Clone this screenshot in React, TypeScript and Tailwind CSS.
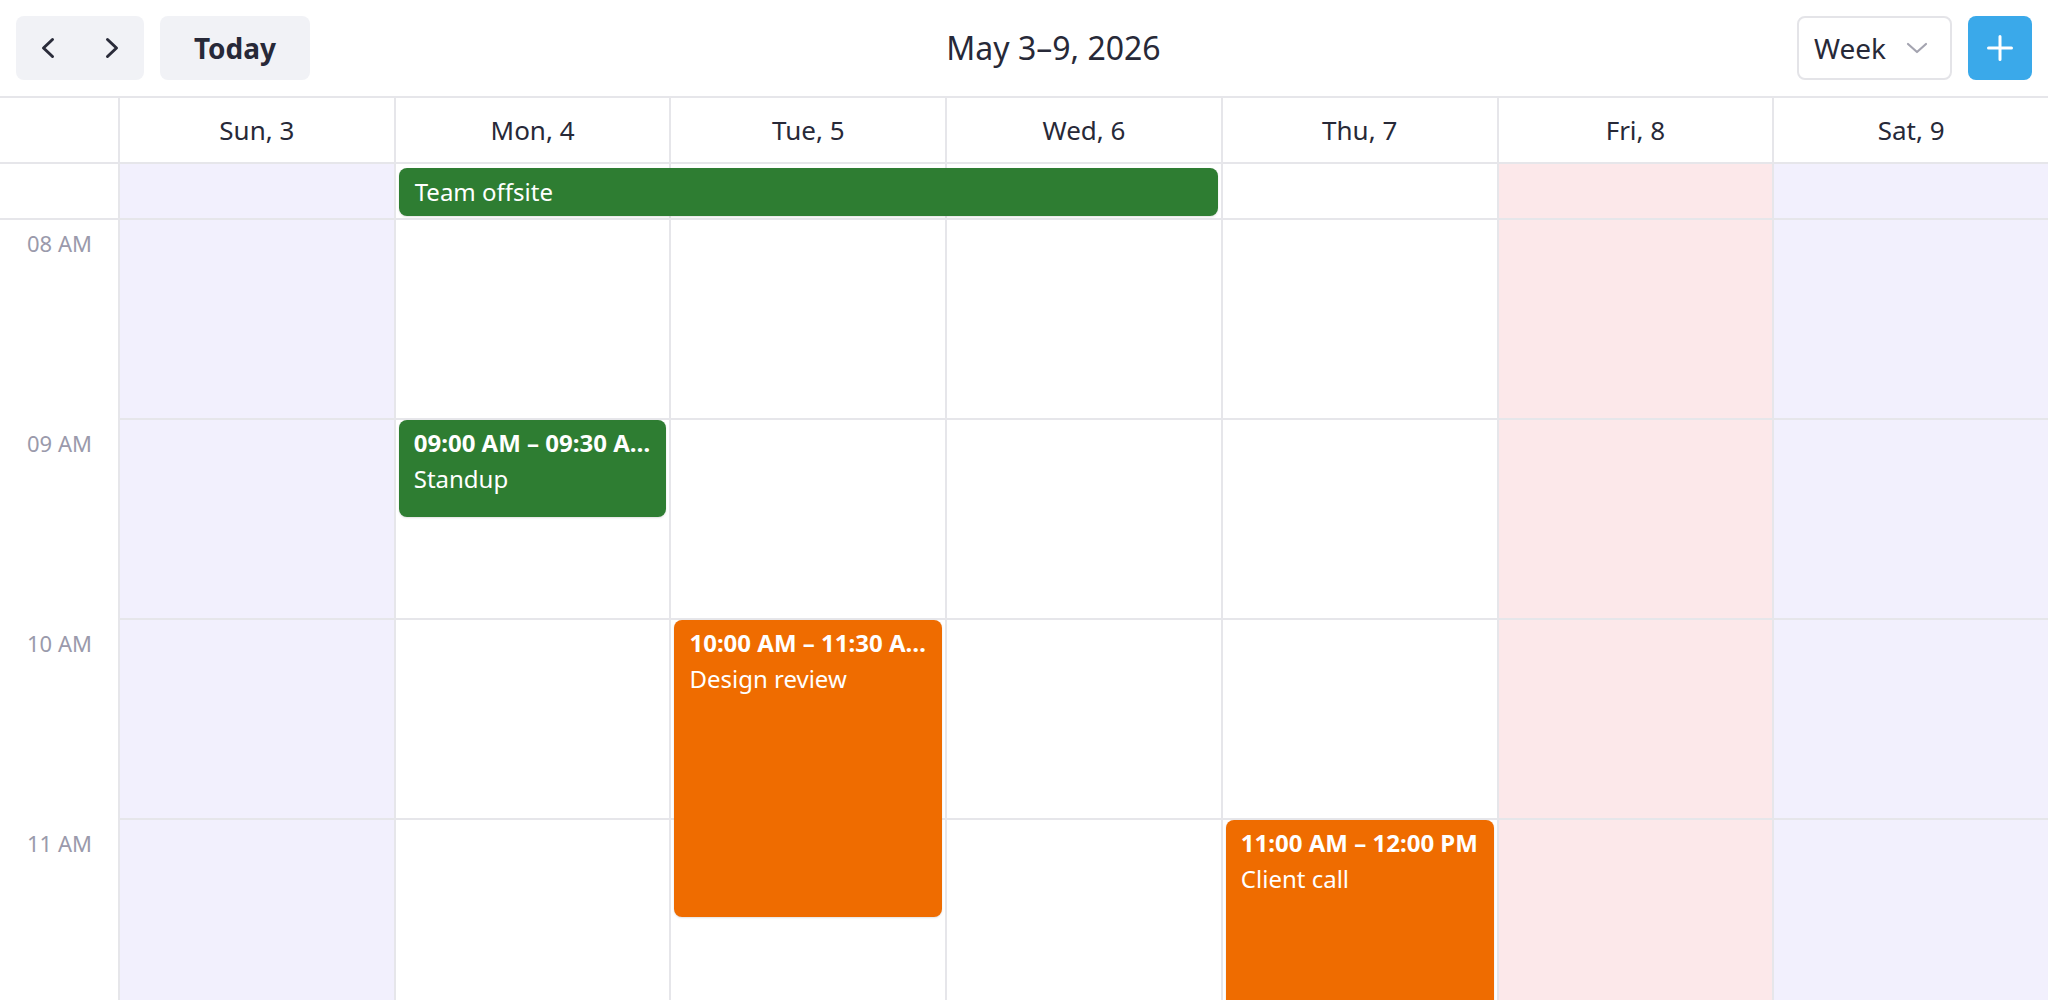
import React from "react";

type Day = { label: string; bg: string; col: string };

const days: Day[] = [
  { label: "Sun, 3", bg: "bg-[#f2f0fd]", col: "col-start-2" },
  { label: "Mon, 4", bg: "bg-white", col: "col-start-3" },
  { label: "Tue, 5", bg: "bg-white", col: "col-start-4" },
  { label: "Wed, 6", bg: "bg-white", col: "col-start-5" },
  { label: "Thu, 7", bg: "bg-white", col: "col-start-6" },
  { label: "Fri, 8", bg: "bg-[#fce8ea]", col: "col-start-7" },
  { label: "Sat, 9", bg: "bg-[#f2f0fd]", col: "col-start-8" },
];

// each hour spans two half-hour rows
const hours = [
  { label: "08 AM", row: "row-start-1" },
  { label: "09 AM", row: "row-start-3" },
  { label: "10 AM", row: "row-start-5" },
  { label: "11 AM", row: "row-start-7" },
];

type CalEvent = {
  time: string;
  title: string;
  place: string;
  color: string;
};

const timedEvents: CalEvent[] = [
  {
    time: "09:00 AM – 09:30 AM",
    title: "Standup",
    place: "col-start-3 row-start-3 row-span-1",
    color: "bg-[#2e7d32]",
  },
  {
    time: "10:00 AM – 11:30 AM",
    title: "Design review",
    place: "col-start-4 row-start-5 row-span-3",
    color: "bg-[#ef6c00]",
  },
  {
    time: "11:00 AM – 12:00 PM",
    title: "Client call",
    place: "col-start-6 row-start-7 row-span-2",
    color: "bg-[#ef6c00]",
  },
];

const line = "border-[#e6e6ea]";

function ChevronLeft() {
  return (
    <svg width="16" height="22" viewBox="0 0 16 22" fill="none">
      <polyline
        points="12.5,2.5 3.5,11 12.5,19.5"
        stroke="#2a2c3a"
        strokeWidth="3"
        strokeLinecap="round"
        strokeLinejoin="round"
      />
    </svg>
  );
}

function ChevronRight() {
  return (
    <svg width="16" height="22" viewBox="0 0 16 22" fill="none">
      <polyline
        points="3.5,2.5 12.5,11 3.5,19.5"
        stroke="#2a2c3a"
        strokeWidth="3"
        strokeLinecap="round"
        strokeLinejoin="round"
      />
    </svg>
  );
}

function ChevronDown() {
  return (
    <svg width="22" height="12" viewBox="0 0 22 12" fill="none">
      <polyline
        points="2,2 11,10 20,2"
        stroke="#a4a4b0"
        strokeWidth="2.2"
        strokeLinecap="round"
        strokeLinejoin="round"
      />
    </svg>
  );
}

function PlusIcon() {
  return (
    <svg width="26" height="26" viewBox="0 0 26 26" fill="none">
      <path d="M13 1.5v23M1.5 13h23" stroke="white" strokeWidth="3" strokeLinecap="round" />
    </svg>
  );
}

function Toolbar() {
  return (
    <header className="flex h-[96px] items-center px-4">
      <div className="flex w-[294px] items-center gap-4">
        <div className="flex h-[64px] w-[128px] rounded-[8px] bg-[#f1f2f6]">
          <button className="flex flex-1 items-center justify-center">
            <ChevronLeft />
          </button>
          <button className="flex flex-1 items-center justify-center">
            <ChevronRight />
          </button>
        </div>
        <button className="flex h-[64px] w-[150px] items-center justify-center rounded-[8px] bg-[#f1f2f6] text-[28px] font-bold text-[#272938]">
          Today
        </button>
      </div>
      <div className="flex-1 text-center text-[32px] leading-none text-[#272938]">
        May 3–9, 2026
      </div>
      <div className="flex items-center gap-4">
        <button className="flex h-[64px] w-[155px] items-center justify-between rounded-[8px] border-2 border-[#e4e4e8] pl-[15px] pr-[22px] text-[28px] text-[#272938]">
          <span>Week</span>
          <ChevronDown />
        </button>
        <button className="flex h-[64px] w-[64px] items-center justify-center rounded-[8px] bg-[#3aa9ea]">
          <PlusIcon />
        </button>
      </div>
    </header>
  );
}

function EventCard({ ev }: { ev: CalEvent }) {
  return (
    <div
      className={`${ev.place} ${ev.color} z-10 mb-[3px] ml-[5px] mr-[3px] min-w-0 overflow-hidden rounded-[8px] px-[15px] pt-[5px] text-[24px] leading-[36px] text-white shadow-[0_1px_2px_rgba(0,0,0,0.12)]`}
    >
      <div className="truncate font-bold">{ev.time}</div>
      <div className="truncate">{ev.title}</div>
    </div>
  );
}

export default function App() {
  return (
    <div className="h-[1000px] w-[2048px] overflow-hidden bg-white font-['Noto_Sans',sans-serif]">
      <Toolbar />

      {/* weekday header */}
      <div className={`grid grid-cols-[118px_repeat(7,minmax(0,1fr))] border-t-2 ${line}`}>
        <div className={`h-[66px] border-b-2 ${line}`} />
        {days.map((d) => (
          <div
            key={d.label}
            className={`flex h-[66px] items-center justify-center border-b-2 border-l-2 ${line} text-[26px] text-[#272938]`}
          >
            {d.label}
          </div>
        ))}
      </div>

      {/* all-day row */}
      <div className="grid h-[56px] grid-cols-[118px_repeat(7,minmax(0,1fr))] grid-rows-[56px]">
        <div className={`col-start-1 row-start-1 border-b-2 ${line}`} />
        {days.map((d) => (
          <div key={d.label} className={`${d.col} row-start-1 border-b-2 border-l-2 ${line} ${d.bg}`} />
        ))}
        <div className="col-span-3 col-start-3 row-start-1 ml-[5px] mr-[3px] mt-[4px] flex h-[48px] items-center rounded-[8px] bg-[#2e7d32] px-[16px] text-[24px] text-white shadow-[0_1px_2px_rgba(0,0,0,0.12)]">
          Team offsite
        </div>
      </div>

      {/* hourly grid */}
      <div className="grid grid-cols-[118px_repeat(7,minmax(0,1fr))] grid-rows-[repeat(8,100px)]">
        {hours.map((h) => (
          <div
            key={h.label}
            className={`col-start-1 ${h.row} row-span-2 pl-[27px] pt-[7px] text-[22px] leading-[33px] text-[#9a9aab]`}
          >
            {h.label}
          </div>
        ))}
        {days.map((d) =>
          hours.map((h) => (
            <div
              key={d.label + h.label}
              className={`${d.col} ${h.row} row-span-2 border-b-2 border-l-2 ${line} ${d.bg}`}
            />
          ))
        )}
        {timedEvents.map((ev) => (
          <EventCard key={ev.title} ev={ev} />
        ))}
      </div>
    </div>
  );
}
